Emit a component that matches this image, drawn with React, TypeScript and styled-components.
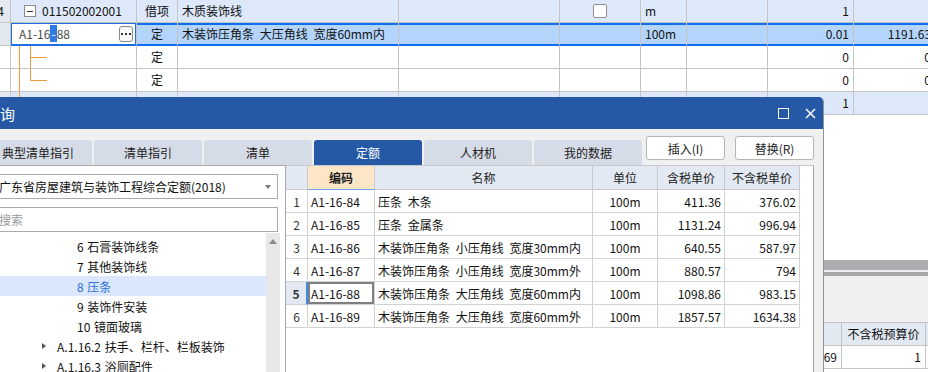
import * as React from 'react'
import styled, { createGlobalStyle, css } from 'styled-components'

const BLUE = '#2559a5'
const LINE = '#c4c4c4'
const ORANGE = '#f29a3d'

const GlobalStyle = createGlobalStyle`
  html, body { margin: 0; padding: 0; background: #fff; }
  body {
    font-family: "Noto Sans CJK SC", "Noto Sans", sans-serif;
    font-size: 12px;
    color: #111;
  }
  *, *::before, *::after { box-sizing: border-box; }
`

const Screen = styled.div`
  position: relative;
  width: 928px;
  height: 372px;
  overflow: hidden;
  display: flex;
  flex-direction: column;
  background: #fff;
`

// ---------- sheet behind the dialog ----------

const Sheet = styled.div`
  margin-left: -20px;
  flex: none;
`

const SheetRow = styled.div<{ $tint?: boolean }>`
  display: grid;
  grid-template-columns: 31px 126px 41px 221px 161px 81px 46px 81px 86px 82px;
  height: 23px;
  background: ${p => (p.$tint ? '#dde8fa' : '#fff')};
`

type Align = 'left' | 'center' | 'right'

const Cell = styled.div<{ $align?: Align; $sel?: boolean; $shade?: boolean }>`
  display: flex;
  align-items: center;
  justify-content: ${p => (p.$align === 'right' ? 'flex-end' : p.$align === 'center' ? 'center' : 'flex-start')};
  padding: 0 4px;
  border-right: 1px solid ${LINE};
  border-bottom: 1px solid ${LINE};
  white-space: nowrap;
  overflow: hidden;
  line-height: 16px;
  word-spacing: 3px;
  ${p => p.$shade && css`background: #e4e9f1;`}
  ${p => p.$sel && css`
    background: #b4d5fb;
    border-bottom-color: #0d6df0;
    box-shadow: inset 0 2px 0 #0d6df0, inset 0 -1px 0 #0d6df0;
  `}
`

const RowHead = styled(Cell)`
  padding-right: 6px;
`

const TreeCell = styled(Cell)`
  padding: 0;
`

const FolderCell = styled(Cell)`
  padding-left: 13px;
`

const ExpandBox = styled.span`
  width: 12px;
  height: 12px;
  flex: none;
  margin-right: 6px;
  border: 1px solid #8c8c8c;
  background: #fff;
  display: flex;
  align-items: center;
  justify-content: center;
  &::after {
    content: '';
    width: 6px;
    height: 1px;
    background: #333;
  }
`

const EditCell = styled(Cell)`
  background: #fff;
  box-shadow: inset 0 0 0 1px #1e6fe6;
  border-bottom-color: #1e6fe6;
  padding: 0 3px 0 8px;
  justify-content: space-between;
  color: #4a4a4a;
`

const Caret = styled.span`
  background: #2f7ae5;
  color: #fff;
  padding: 0 1px;
`

const MoreButton = styled.span`
  width: 14px;
  height: 16px;
  border: 1px solid #8a8a8a;
  border-radius: 3px;
  background: #f8f8f8;
  display: flex;
  align-items: center;
  justify-content: center;
`

const Check = styled.span`
  width: 14px;
  height: 14px;
  border: 1px solid #8f8f8f;
  border-radius: 2px;
  background: #fff;
`

const Blank = styled.div`
  height: 145px;
  flex: none;
`

const Splitter = styled.div`
  height: 16px;
  flex: none;
  background: #eceef0;
  border-top: 10px solid #acaeb1;
  border-bottom: 4px solid #a6a8ab;
`

const Strip = styled.div`
  height: 47px;
  flex: none;
  background: #f0f0f0;
  border-bottom: 1px solid ${LINE};
`

const LowerRow = styled.div<{ $head?: boolean }>`
  display: grid;
  grid-template-columns: 842px 84px 1fr;
  height: 23px;
  flex: none;
  background: ${p => (p.$head ? '#e3e9f2' : '#fff')};
`

// ---------- dialog ----------

const Dialog = styled.section`
  position: absolute;
  left: -26px;
  top: 97px;
  width: 850px;
  height: 300px;
  display: flex;
  flex-direction: column;
  background: #f0f0f0;
  border: 1px solid #8f9297;
  border-top: 0;
  border-radius: 5px 5px 0 0;
  overflow: hidden;
`

const TitleBar = styled.header`
  height: 32px;
  flex: none;
  display: flex;
  align-items: center;
  padding: 0 7px 0 10px;
  background: ${BLUE};
  color: #fff;
  font-size: 15px;
`

const WinIcons = styled.div`
  margin-left: auto;
  display: flex;
  align-items: center;
  gap: 16px;
`

const MaxIcon = styled.span`
  width: 11px;
  height: 11px;
  border: 1.5px solid #fff;
`

const Body = styled.div`
  flex: 1;
  display: flex;
  flex-direction: column;
  padding: 7px 9px 0 9px;
  min-height: 0;
`

const ToolRow = styled.div`
  height: 29px;
  flex: none;
  display: flex;
  align-items: flex-end;
  gap: 2px;
`

const Tab = styled.div<{ $active?: boolean }>`
  width: 108px;
  height: 25px;
  flex: none;
  display: flex;
  align-items: center;
  justify-content: center;
  border-radius: 3px 3px 0 0;
  background: ${p => (p.$active ? BLUE : '#d6dce7')};
  color: ${p => (p.$active ? '#fff' : '#222')};
`

const Actions = styled.div`
  margin-left: auto;
  align-self: flex-start;
  display: flex;
  gap: 10px;
`

const ActionButton = styled.button`
  width: 79px;
  height: 24px;
  padding: 0;
  border: 1px solid #b5b5b5;
  border-radius: 3px;
  background: #fff;
  font: inherit;
  font-size: 12px;
  color: #222;
`

const Panels = styled.div`
  flex: 1;
  display: flex;
  min-height: 0;
`

const LeftPanel = styled.div`
  width: 302px;
  flex: none;
  display: flex;
  flex-direction: column;
  background: #fff;
  border-top: 1px solid #a9a9a9;
  border-right: 1px solid #a9a9a9;
`

const Field = styled.div`
  height: 25px;
  margin: 8px 7px 0 8px;
  display: flex;
  align-items: center;
  padding: 0 6px;
  border: 1px solid #aaaaaa;
  background: #fff;
  white-space: nowrap;
`

const FieldText = styled.span<{ $muted?: boolean }>`
  flex: 1;
  color: ${p => (p.$muted ? '#9a9a9a' : '#111')};
`

const DropArrow = styled.span`
  width: 0;
  height: 0;
  border-left: 3.5px solid transparent;
  border-right: 3.5px solid transparent;
  border-top: 4px solid #777;
`

const Tree = styled.div`
  flex: 1;
  display: flex;
  margin-top: 1px;
  min-height: 0;
`

const TreeList = styled.div`
  flex: 1;
  padding-top: 3px;
`

const TreeItem = styled.div<{ $indent: number; $sel?: boolean }>`
  height: 20px;
  display: flex;
  align-items: center;
  padding-left: ${p => p.$indent}px;
  white-space: pre;
  word-spacing: 1px;
  background: ${p => (p.$sel ? '#dae7fc' : 'transparent')};
  color: ${p => (p.$sel ? '#2b6fd8' : '#111')};
`

const Toggle = styled.span`
  width: 0;
  height: 0;
  margin-right: 11px;
  border-top: 3.5px solid transparent;
  border-bottom: 3.5px solid transparent;
  border-left: 4px solid #555;
`

const ScrollTrack = styled.div`
  width: 14px;
  flex: none;
  margin-right: 5px;
  background: #e8e8e8;
  display: flex;
  justify-content: center;
  padding-top: 6px;
`

const ScrollUp = styled.span`
  width: 0;
  height: 0;
  border-left: 4px solid transparent;
  border-right: 4px solid transparent;
  border-bottom: 5px solid #8a8a8a;
`

const GridPanel = styled.div`
  flex: 1;
  background: #fff;
  border-top: 1px solid #c8c8c8;
  border-right: 1px solid #a9a9a9;
`

const GridRow = styled.div<{ $head?: boolean }>`
  display: grid;
  grid-template-columns: 22px 67px 218px 65px 67px 75px;
  height: ${p => (p.$head ? 24 : 23)}px;
`

const GCell = styled.div<{ $align?: Align; $head?: boolean; $key?: boolean; $focus?: boolean; $num?: boolean; $cur?: boolean }>`
  display: flex;
  align-items: center;
  justify-content: ${p => (p.$align === 'right' ? 'flex-end' : p.$align === 'center' ? 'center' : 'flex-start')};
  padding: 0 3px;
  border-right: 1px solid #d2d2d2;
  border-bottom: 1px solid #d2d2d2;
  white-space: nowrap;
  overflow: hidden;
  word-spacing: 3px;
  ${p => p.$head && css`
    background: #e3e9f2;
    border-color: #c8ccd2;
    color: #222;
  `}
  ${p => p.$key && css`
    background: #fde6c8;
    font-weight: bold;
    border-bottom-color: #6fa3e6;
  `}
  ${p => p.$num && css`color: #333;`}
  ${p => p.$cur && css`
    background: #e3e9f2;
    font-weight: bold;
    border-right: 2px solid #3d8ae8;
  `}
  ${p => p.$focus && css`box-shadow: inset 0 0 0 2px #7f7f7f;`}
`

// ---------- data ----------

const quotas = [
  ['A1-16-84', '压条 木条', '411.36', '376.02'],
  ['A1-16-85', '压条 金属条', '1131.24', '996.94'],
  ['A1-16-86', '木装饰压角条 小压角线 宽度30mm内', '640.55', '587.97'],
  ['A1-16-87', '木装饰压角条 小压角线 宽度30mm外', '880.57', '794'],
  ['A1-16-88', '木装饰压角条 大压角线 宽度60mm内', '1098.86', '983.15'],
  ['A1-16-89', '木装饰压角条 大压角线 宽度60mm外', '1857.57', '1634.38'],
]

const tabs = ['典型清单指引', '清单指引', '清单', '定额', '人材机', '我的数据']

const treeItems: { label: string; branch?: boolean; sel?: boolean }[] = [
  { label: '6 石膏装饰线条' },
  { label: '7 其他装饰线' },
  { label: '8 压条', sel: true },
  { label: '9 装饰件安装' },
  { label: '10 镜面玻璃' },
  { label: 'A.1.16.2 扶手、栏杆、栏板装饰', branch: true },
  { label: 'A.1.16.3 浴厕配件', branch: true },
]

function Guide({ kind }: { kind: 'mid' | 'last' | 'pass' }) {
  return (
    <svg width="40" height="22" viewBox="0 0 40 22">
      <line x1="8.5" y1="0" x2="8.5" y2="22" stroke={ORANGE} />
      {kind !== 'pass' && (
        <>
          <line x1="19.5" y1="0" x2="19.5" y2={kind === 'mid' ? 22 : 11.5} stroke={ORANGE} />
          <line x1="19.5" y1="11.5" x2="36" y2="11.5" stroke={ORANGE} />
        </>
      )}
    </svg>
  )
}

function SubRow({ kind }: { kind: 'mid' | 'last' }) {
  return (
    <SheetRow>
      <RowHead $align="right" />
      <TreeCell><Guide kind={kind} /></TreeCell>
      <Cell $align="center">定</Cell>
      <Cell /><Cell /><Cell /><Cell /><Cell />
      <Cell $align="right">0</Cell>
      <Cell $align="right">0</Cell>
    </SheetRow>
  )
}

export default function App() {
  return (
    <Screen>
      <GlobalStyle />
      <Sheet>
        <SheetRow $tint>
          <RowHead $align="right" $shade>4</RowHead>
          <FolderCell><ExpandBox />011502002001</FolderCell>
          <Cell $align="center">借项</Cell>
          <Cell>木质装饰线</Cell>
          <Cell />
          <Cell $align="center"><Check /></Cell>
          <Cell>m</Cell>
          <Cell />
          <Cell $align="right">1</Cell>
          <Cell />
        </SheetRow>
        <SheetRow>
          <RowHead $align="right" $shade />
          <EditCell>
            <span>A1-16<Caret>-</Caret>88</span>
            <MoreButton>
              <svg width="10" height="4" viewBox="0 0 10 4">
                <rect x="0" y="1" width="2" height="2" fill="#333" />
                <rect x="4" y="1" width="2" height="2" fill="#333" />
                <rect x="8" y="1" width="2" height="2" fill="#333" />
              </svg>
            </MoreButton>
          </EditCell>
          <Cell $align="center" $sel>定</Cell>
          <Cell $sel>木装饰压角条 大压角线 宽度60mm内</Cell>
          <Cell $sel />
          <Cell $sel />
          <Cell $sel>100m</Cell>
          <Cell $sel />
          <Cell $align="right" $sel>0.01</Cell>
          <Cell $align="right" $sel>1191.63</Cell>
        </SheetRow>
        <SubRow kind="mid" />
        <SubRow kind="last" />
        <SheetRow $tint>
          <RowHead $align="right" $shade />
          <TreeCell><Guide kind="pass" /></TreeCell>
          <Cell /><Cell /><Cell /><Cell /><Cell /><Cell />
          <Cell $align="right">1</Cell>
          <Cell />
        </SheetRow>
      </Sheet>
      <Blank />
      <Splitter />
      <Strip />
      <LowerRow $head>
        <Cell />
        <Cell $align="center">不含税预算价</Cell>
        <Cell />
      </LowerRow>
      <LowerRow>
        <Cell $align="right">69</Cell>
        <Cell $align="right">1</Cell>
        <Cell />
      </LowerRow>

      <Dialog>
        <TitleBar>
          <span>查询</span>
          <WinIcons>
            <MaxIcon />
            <svg width="11" height="11" viewBox="0 0 11 11">
              <path d="M1 1 L10 10 M10 1 L1 10" stroke="#fff" strokeWidth="1.5" />
            </svg>
          </WinIcons>
        </TitleBar>
        <Body>
          <ToolRow>
            {tabs.map(t => (
              <Tab key={t} $active={t === '定额'}>{t}</Tab>
            ))}
            <Actions>
              <ActionButton>插入(I)</ActionButton>
              <ActionButton>替换(R)</ActionButton>
            </Actions>
          </ToolRow>
          <Panels>
            <LeftPanel>
              <Field>
                <FieldText>广东省房屋建筑与装饰工程综合定额(2018)</FieldText>
                <DropArrow />
              </Field>
              <Field>
                <FieldText $muted>搜索</FieldText>
              </Field>
              <Tree>
                <TreeList>
                  {treeItems.map(it => (
                    <TreeItem key={it.label} $indent={it.branch ? 58 : 93} $sel={it.sel}>
                      {it.branch && <Toggle />}
                      {it.label}
                    </TreeItem>
                  ))}
                </TreeList>
                <ScrollTrack><ScrollUp /></ScrollTrack>
              </Tree>
            </LeftPanel>
            <GridPanel>
              <GridRow $head>
                <GCell $head />
                <GCell $head $key $align="center">编码</GCell>
                <GCell $head $align="center">名称</GCell>
                <GCell $head $align="center">单位</GCell>
                <GCell $head $align="center">含税单价</GCell>
                <GCell $head $align="center">不含税单价</GCell>
              </GridRow>
              {quotas.map((q, i) => (
                <GridRow key={q[0]}>
                  <GCell $align="center" $num $cur={i === 4}>{i + 1}</GCell>
                  <GCell $focus={i === 4}>{q[0]}</GCell>
                  <GCell>{q[1]}</GCell>
                  <GCell $align="center">100m</GCell>
                  <GCell $align="right">{q[2]}</GCell>
                  <GCell $align="right">{q[3]}</GCell>
                </GridRow>
              ))}
            </GridPanel>
          </Panels>
        </Body>
      </Dialog>
    </Screen>
  )
}
